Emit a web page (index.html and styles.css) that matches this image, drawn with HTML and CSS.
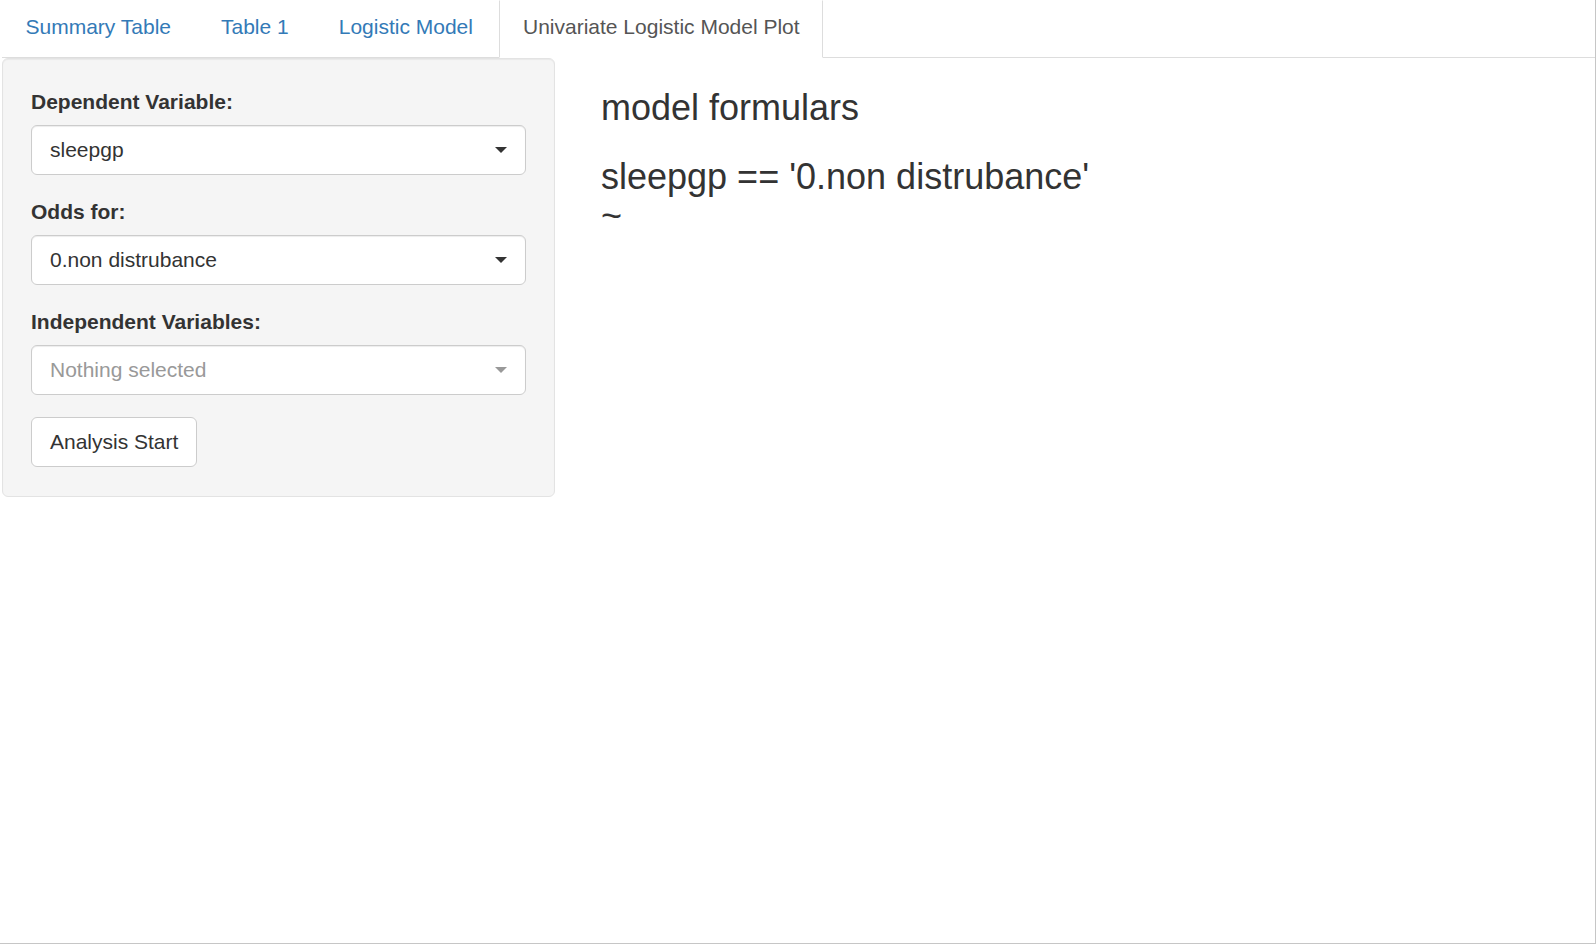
FILE: index.html
```html
<!DOCTYPE html>
<html>
<head>
<meta charset="utf-8">
<link rel="stylesheet" href="styles.css">
</head>
<body>
<div class="frame">
  <ul class="nav-tabs">
    <li class="tab"><a class="tab-link">Summary Table</a></li>
    <li class="tab"><a class="tab-link">Table 1</a></li>
    <li class="tab"><a class="tab-link">Logistic Model</a></li>
    <li class="tab active"><a class="tab-link">Univariate Logistic Model Plot</a></li>
  </ul>
  <div class="content-row">
    <div class="well">
      <div class="form-group">
        <label class="control-label">Dependent Variable:</label>
        <div class="select-box"><span class="select-text">sleepgp</span><span class="caret"></span></div>
      </div>
      <div class="form-group">
        <label class="control-label">Odds for:</label>
        <div class="select-box"><span class="select-text">0.non distrubance</span><span class="caret"></span></div>
      </div>
      <div class="form-group">
        <label class="control-label">Independent Variables:</label>
        <div class="select-box placeholder"><span class="select-text">Nothing selected</span><span class="caret"></span></div>
      </div>
      <button class="btn">Analysis Start</button>
    </div>
    <div class="main">
      <h3 class="formula-title">model formulars</h3>
      <h3 class="formula">sleepgp == '0.non distrubance'<br>~</h3>
    </div>
  </div>
</div>
</body>
</html>
```
FILE: styles.css
```css
html, body {
  margin: 0;
  padding: 0;
  background: #fff;
}
body {
  font-family: "Liberation Sans", Arial, Helvetica, sans-serif;
  font-size: 21px;
  color: #333;
}
.frame {
  width: 1596px;
  height: 944px;
  box-sizing: border-box;
  border-right: 1px solid #c6c6c6;
  border-bottom: 1px solid #c6c6c6;
  overflow: hidden;
}
.nav-tabs {
  list-style: none;
  display: flex;
  margin: 0 0 0 2px;
  padding: 0;
  border-bottom: 1px solid #ddd;
}
.tab {
  margin-right: 3px;
  margin-bottom: -1px;
}
.tab-link {
  display: block;
  padding: 11px 22.5px 15px;
  line-height: 30px;
  border: 1px solid transparent;
  color: #337ab7;
  cursor: pointer;
}
.tab.active .tab-link {
  background: #fff;
  color: #555;
  border-color: transparent #ddd transparent #ddd;
}
.content-row {
  display: flex;
  align-items: flex-start;
}
.well {
  box-sizing: border-box;
  width: 553px;
  margin-left: 2px;
  padding: 28px 28px 29px;
  background: #f5f5f5;
  border: 1px solid #e3e3e3;
  border-radius: 6px;
  box-shadow: inset 0 1px 1px rgba(0,0,0,.05);
}
.form-group {
  margin-bottom: 22px;
}
.control-label {
  display: block;
  font-weight: bold;
  line-height: 30px;
  margin-bottom: 8px;
}
.select-box {
  box-sizing: border-box;
  height: 50px;
  background: #fff;
  border: 1px solid #ccc;
  border-radius: 6px;
  box-shadow: inset 0 1px 1px rgba(0,0,0,.075);
  display: flex;
  align-items: center;
  justify-content: space-between;
  padding: 0 18px 0 18px;
}
.select-text {
  color: #333;
  line-height: 30px;
}
.caret {
  width: 0;
  height: 0;
  border-top: 6px solid #333;
  border-left: 6px solid transparent;
  border-right: 6px solid transparent;
}
.placeholder .select-text {
  color: #999;
}
.placeholder .caret {
  border-top-color: #999;
}
.btn {
  display: block;
  box-sizing: border-box;
  height: 50px;
  padding: 0 18px;
  font-family: inherit;
  font-size: 21px;
  color: #333;
  background: #fff;
  border: 1px solid #ccc;
  border-radius: 6px;
  line-height: 30px;
}
.main {
  margin-left: 46px;
  margin-top: 30px;
}
.formula-title, .formula {
  font-size: 36px;
  font-weight: normal;
  line-height: 39.6px;
  margin: 0;
  color: #333;
}
.formula {
  margin-top: 29px;
}
```
